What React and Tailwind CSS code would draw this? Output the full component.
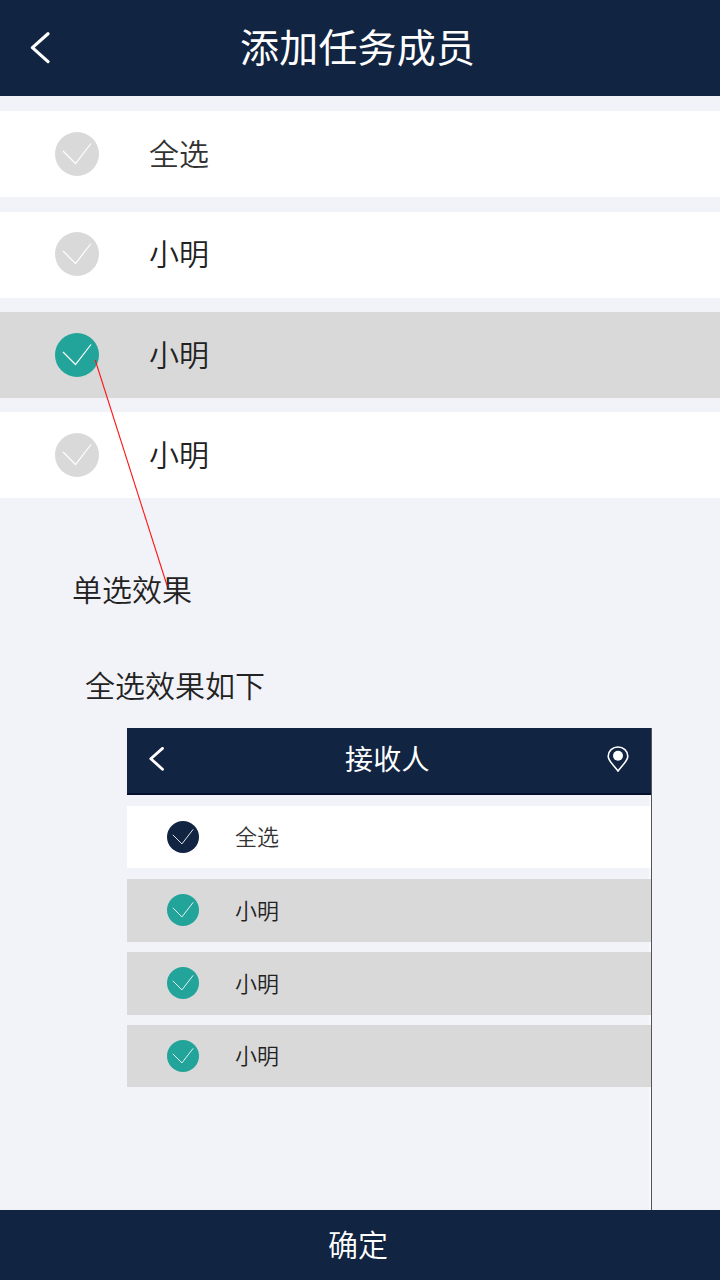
const members = [
  { name: '全选', checked: false, gap: 'mt-[15px]', disc: '', label: 'mb-1 text-[#333333]' },
  { name: '小明', checked: false, gap: 'mt-[15px]', disc: 'mb-0.5', label: 'mb-1.5 text-[#222222]' },
  { name: '小明', checked: true, gap: 'mt-[14px]', disc: '', label: 'mb-1 text-[#222222]' },
  { name: '小明', checked: false, gap: 'mt-[14px]', disc: '', label: 'mb-1 text-[#222222]' },
];

const receivers = [
  { name: '全选', row: 'mt-[10px] h-[62px] bg-white', disc: 'text-[#112441]', tone: 'text-[#333333]' },
  { name: '小明', row: 'mt-[11px] h-[63px] bg-[#d9d9d9]', disc: 'mb-0.5 text-[#22a49a]', tone: 'text-[#222222]' },
  { name: '小明', row: 'mt-[10px] h-[63px] bg-[#d9d9d9]', disc: 'mb-px text-[#22a49a]', tone: 'text-[#222222]' },
  { name: '小明', row: 'mt-[10px] h-[62px] bg-[#d9d9d9]', disc: 'text-[#22a49a]', tone: 'text-[#222222]' },
];

function CheckDisc({ className }) {
  return (
    <svg viewBox="0 0 44 44" className={className}>
      <circle cx="22" cy="22" r="22" fill="currentColor" />
      <path d="M8 19 L20.5 31.5 L36 11.5" fill="none" stroke="#fff" strokeWidth="1.2" />
    </svg>
  );
}

function BackArrow({ className, width }) {
  return (
    <svg viewBox="0 0 20 32" className={className}>
      <path d="M18 1.8 L2.4 15.6 L18 29.6" fill="none" stroke="#fff" strokeWidth={width} strokeLinecap="round" strokeLinejoin="round" />
    </svg>
  );
}

function LocationPin() {
  return (
    <svg viewBox="0 0 22 27" className="h-[27px] w-[22px] shrink-0">
      <path d="M11 25.2 C8.8 21 1.2 15.5 1.2 10.2 A9.8 9.2 0 0 1 20.8 10.2 C20.8 15.5 13.2 21 11 25.2 Z" fill="none" stroke="#fff" strokeWidth="1.6" strokeLinejoin="round" />
      <circle cx="11" cy="9.8" r="5" fill="#fff" />
    </svg>
  );
}

function ReceiverPanel() {
  return (
    <section className="ml-[127px] mt-[22px] h-[482px] w-[525px] shrink-0 border-r border-[#555555]">
      <header className="flex h-[67px] items-center border-b-2 border-[#050f2c] bg-[#112441] pl-[22px] pr-[22px]">
        <BackArrow className="mb-[3px] h-[24px] w-[15px] shrink-0" width="3.8" />
        <h2 className="mb-[5px] ml-[181px] flex-1 whitespace-nowrap text-[28px] font-normal leading-[40px] tracking-[0.3px] text-white">接收人</h2>
        <div className="pb-0.5">
          <LocationPin />
        </div>
      </header>
      <div className="h-[415px] border-r-2 border-[#f8f8fa] pt-px">
        {receivers.map((r, i) => (
          <div key={i} className={`-mr-[2px] flex items-center pl-10 ${r.row}`}>
            <CheckDisc className={`size-8 shrink-0 ${r.disc}`} />
            <span className={`mb-1 ml-9 text-[22px] leading-[32px] ${r.tone}`}>{r.name}</span>
          </div>
        ))}
      </div>
    </section>
  );
}

export default function App() {
  return (
    <div className="relative flex h-[1280px] w-[720px] flex-col overflow-hidden bg-[#f2f3f8] font-['Noto_Sans_CJK_SC',sans-serif] font-[350]">
      <header className="flex h-24 shrink-0 items-center bg-[#112441] pl-[30px]">
        <BackArrow className="h-8 w-5 shrink-0" width="3.2" />
        <h1 className="mb-1.5 ml-[190px] text-[39px] font-normal leading-[56px] tracking-[0.2px] text-white">添加任务成员</h1>
      </header>

      {members.map((m, i) => (
        <div key={i} className={`flex h-[86px] shrink-0 items-center pl-[55px] ${m.gap} ${m.checked ? 'bg-[#d9d9d9]' : 'bg-white'}`}>
          <CheckDisc className={`size-11 shrink-0 ${m.disc} ${m.checked ? 'text-[#22a49a]' : 'text-[#d9d9d9]'}`} />
          <span className={`ml-[50px] text-[30px] leading-[44px] ${m.label}`}>{m.name}</span>
        </div>
      ))}

      <p className="ml-[72px] mt-[68px] text-[30px] leading-[44px] text-[#222222]">单选效果</p>
      <p className="ml-[85px] mt-[52px] text-[30px] leading-[44px] text-[#222222]">全选效果如下</p>
      <ReceiverPanel />

      <footer className="mt-auto flex h-[70px] shrink-0 items-center bg-[#112441] pl-[328px]">
        <button type="button" className="mb-1 text-[30px] leading-[44px] text-white">确定</button>
      </footer>

      <svg viewBox="0 0 76 228" className="pointer-events-none absolute left-[94px] top-[359px] h-[228px] w-[76px]">
        <path d="M1.2 1 L73.2 227" fill="none" stroke="#ff1414" strokeWidth="1.1" />
      </svg>
    </div>
  );
}
